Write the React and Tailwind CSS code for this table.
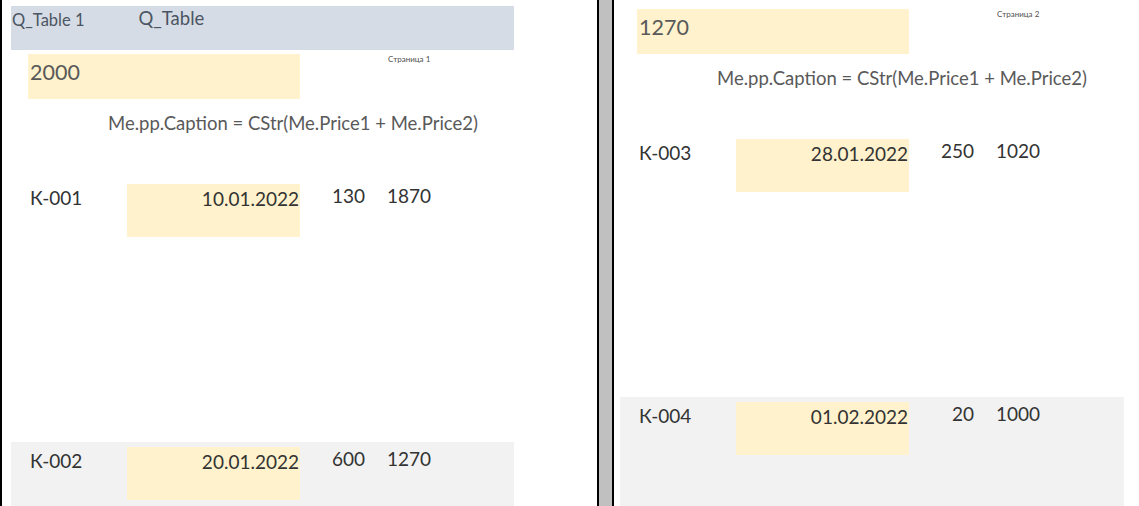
const rows1 = [
  { code: 'К-001', date: '10.01.2022', qty: '130', sum: '1870', alt: false },
  { code: 'К-002', date: '20.01.2022', qty: '600', sum: '1270', alt: true },
]

const rows2 = [
  { code: 'К-003', date: '28.01.2022', qty: '250', sum: '1020', alt: false },
  { code: 'К-004', date: '01.02.2022', qty: '20', sum: '1000', alt: true },
]

function PageHeader({ total, page }) {
  return (
    <div className="h-[129px] flex flex-col">
      <div className="flex items-start pt-[4px]">
        <div className="ml-[17px] w-[272px] h-[45px] bg-[#fff2cc] flex items-center pl-[2px] text-[21.5px] text-[#595959] leading-none pb-[8px]">
          {total}
        </div>
        <div className="ml-[88px] mt-[1px] text-[8px] text-[#505050] leading-none">Страница {page}</div>
      </div>
      <div className="ml-[97px] mt-[15px] text-[18.5px] text-[#595959] leading-none">
        Me.pp.Caption = CStr(Me.Price1 + Me.Price2)
      </div>
    </div>
  )
}

function Row({ r }) {
  return (
    <div className={`h-[263px] flex items-start pt-[5px] text-[19px] text-[#333] leading-none ${r.alt ? 'bg-[#f2f2f2]' : ''}`}>
      <div className="ml-[19px] w-[97px] pt-[4px]">{r.code}</div>
      <div className="w-[173px] h-[53px] bg-[#fff2cc] text-right pr-[1px] pt-[5px]">{r.date}</div>
      <div className="w-[65px] text-right pt-[2px]">{r.qty}</div>
      <div className="ml-[22px] pt-[2px]">{r.sum}</div>
    </div>
  )
}

export default function App() {
  return (
    <div className="w-[1139px] h-[506px] bg-white flex overflow-hidden font-['Lato',sans-serif]">
      <div className="w-[2px] bg-black shrink-0" />

      {/* page 1 */}
      <div className="w-[595px] shrink-0 pt-[6px] pl-[9px]">
        <div className="w-[503px]">
          <div className="h-[44px] bg-[#d6dce5] flex items-start text-[#4b5563]">
            <span className="ml-[1px] mt-[6px] text-[16.5px] leading-none">Q_Table 1</span>
            <span className="ml-[54px] mt-[3px] text-[18.5px] leading-none">Q_Table</span>
          </div>
          <PageHeader total="2000" page="1" />
          {rows1.map(r => <Row key={r.code} r={r} />)}
        </div>
      </div>

      {/* splitter */}
      <div className="w-[2px] bg-black shrink-0" />
      <div className="w-[13px] bg-[#c0c0c0] shrink-0" />
      <div className="w-[2px] bg-black shrink-0" />

      {/* page 2 */}
      <div className="flex-1 pl-[6px] pt-[5px]">
        <div className="w-[504px]">
          <PageHeader total="1270" page="2" />
          {rows2.map(r => <Row key={r.code} r={r} />)}
        </div>
      </div>
    </div>
  )
}
